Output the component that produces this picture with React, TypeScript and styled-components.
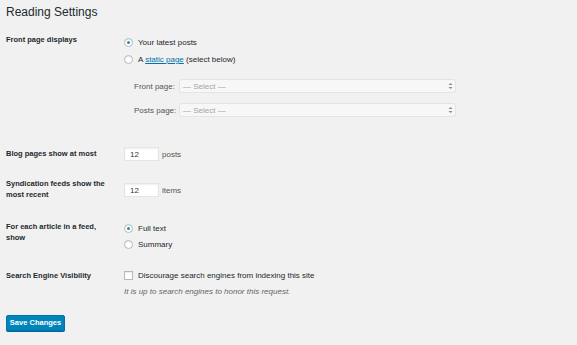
import React from "react";
import styled, { createGlobalStyle } from "styled-components";

const Global = createGlobalStyle`
  html, body { margin: 0; padding: 0; background: #f1f1f1; }
  body { font-family: "Liberation Sans", Arial, sans-serif; color: #23282d; }
`;

const Page = styled.div`
  width: 577px;
  height: 345px;
  box-sizing: border-box;
  padding: 0 6px;
  display: flex;
  flex-direction: column;
  overflow: hidden;
`;

const Title = styled.h1`
  margin: 3px 0 0 0;
  font-size: 12px;
  font-weight: 400;
  line-height: 18px;
  color: #23282d;
`;

const Row = styled.div<{ $mt: number }>`
  display: grid;
  grid-template-columns: 118px 1fr;
  margin-top: ${(p) => p.$mt}px;
  align-items: start;
`;

const Label = styled.div<{ $pt?: number }>`
  padding-top: ${(p) => p.$pt ?? 0}px;
  font-size: 7.5px;
  font-weight: 700;
  line-height: 11px;
  width: 104px;
`;

const Field = styled.div<{ $pt?: number }>`
  padding-top: ${(p) => p.$pt ?? 0}px;
  display: flex;
  flex-direction: column;
  font-size: 8px;
  line-height: 11px;
`;

const Choice = styled.label<{ $h: number }>`
  display: flex;
  align-items: center;
  height: ${(p) => p.$h}px;
  gap: 5px;
`;

const Radio = styled.span<{ $on?: boolean }>`
  box-sizing: border-box;
  width: 9px;
  height: 9px;
  border-radius: 50%;
  border: 1px solid #b4b9be;
  background: #fff;
  box-shadow: inset 0 1px 1px rgba(0, 0, 0, 0.08);
  display: flex;
  align-items: center;
  justify-content: center;
  flex: none;
  &::after {
    content: "";
    display: ${(p) => (p.$on ? "block" : "none")};
    width: 3px;
    height: 3px;
    border-radius: 50%;
    background: #1e8cbe;
  }
`;

const Check = styled.span`
  box-sizing: border-box;
  width: 9px;
  height: 9px;
  border: 1px solid #b4b9be;
  background: #fff;
  box-shadow: inset 0 1px 1px rgba(0, 0, 0, 0.08);
  flex: none;
`;

const Link = styled.a`
  color: #0073aa;
  text-decoration: underline;
`;

const SelectRow = styled.div<{ $mt: number }>`
  display: flex;
  align-items: center;
  margin-top: ${(p) => p.$mt}px;
  padding-left: 10px;
  color: #555;
`;

const SelectLabel = styled.span`
  width: 45px;
  flex: none;
  white-space: nowrap;
`;

const SelectBox = styled.div`
  box-sizing: border-box;
  width: 277px;
  height: 14px;
  border: 1px solid #e4e4e4;
  border-radius: 3px;
  background: #f7f7f7;
  display: flex;
  align-items: center;
  justify-content: space-between;
  padding: 0 2px 0 3px;
  color: #a0a5aa;
`;

const Inline = styled.div`
  display: flex;
  align-items: center;
  gap: 3px;
  color: #555;
`;

const NumberInput = styled.div`
  box-sizing: border-box;
  width: 35px;
  height: 14px;
  background: #fff;
  border: 1px solid #e5e5e5;
  box-shadow: inset 0 1px 2px rgba(0, 0, 0, 0.07);
  padding-left: 5px;
  display: flex;
  align-items: center;
  color: #32373c;
`;

const Note = styled.p`
  margin: 5px 0 0 0;
  font-style: italic;
  color: #666;
  line-height: 11px;
`;

const Button = styled.button`
  margin-top: 18px;
  align-self: flex-start;
  box-sizing: border-box;
  height: 16px;
  width: 59px;
  padding: 0;
  background: #0085ba;
  border: 1px solid #0073aa;
  border-radius: 2px;
  box-shadow: 0 1px 0 #006799;
  color: #fff;
  font-family: "Liberation Sans", Arial, sans-serif;
  font-size: 7.5px;
  font-weight: 700;
  line-height: 14px;
`;

const Arrows = () => (
  <svg width="5" height="8" viewBox="0 0 5 8">
    <path d="M0.5 3 L2.5 1 L4.5 3 Z M0.5 5 L2.5 7 L4.5 5 Z" fill="#888" />
  </svg>
);

export default function App() {
  return (
    <>
      <Global />
      <Page>
        <Title>Reading Settings</Title>
        <Row $mt={13}>
          <Label>Front page displays</Label>
          <Field>
            <Choice $h={17}>
              <Radio $on />
              <span>Your latest posts</span>
            </Choice>
            <Choice $h={17}>
              <Radio />
              <span>
                A <Link>static page</Link> (select below)
              </span>
            </Choice>
            <SelectRow $mt={11}>
              <SelectLabel>Front page:</SelectLabel>
              <SelectBox>
                <span>— Select —</span>
                <Arrows />
              </SelectBox>
            </SelectRow>
            <SelectRow $mt={10}>
              <SelectLabel>Posts page:</SelectLabel>
              <SelectBox>
                <span>— Select —</span>
                <Arrows />
              </SelectBox>
            </SelectRow>
          </Field>
        </Row>
        <Row $mt={30}>
          <Label $pt={1}>Blog pages show at most</Label>
          <Field>
            <Inline>
              <NumberInput>12</NumberInput>
              <span>posts</span>
            </Inline>
          </Field>
        </Row>
        <Row $mt={17}>
          <Label>Syndication feeds show the most recent</Label>
          <Field $pt={5}>
            <Inline>
              <NumberInput>12</NumberInput>
              <span>items</span>
            </Inline>
          </Field>
        </Row>
        <Row $mt={20}>
          <Label $pt={1}>For each article in a feed, show</Label>
          <Field>
            <Choice $h={16}>
              <Radio $on />
              <span>Full text</span>
            </Choice>
            <Choice $h={16}>
              <Radio />
              <span>Summary</span>
            </Choice>
          </Field>
        </Row>
        <Row $mt={18}>
          <Label>Search Engine Visibility</Label>
          <Field>
            <Choice $h={11}>
              <Check />
              <span>Discourage search engines from indexing this site</span>
            </Choice>
            <Note>It is up to search engines to honor this request.</Note>
          </Field>
        </Row>
        <Button>Save Changes</Button>
      </Page>
    </>
  );
}
